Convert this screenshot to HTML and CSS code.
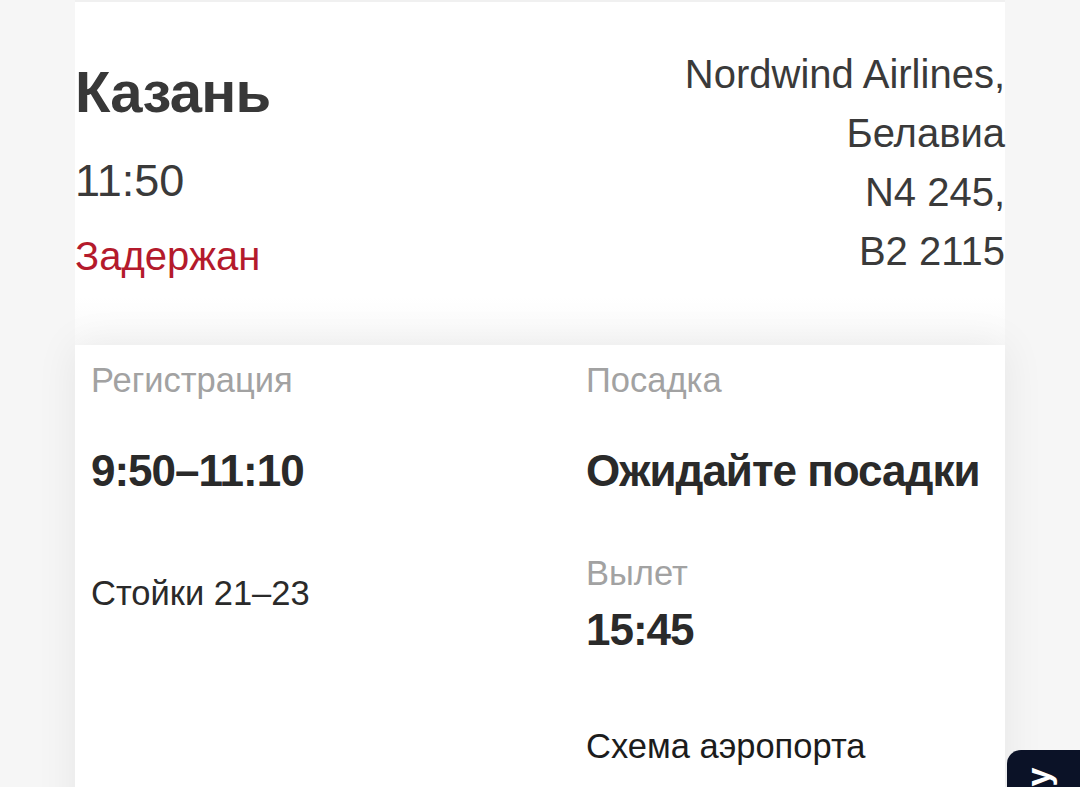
FILE: index.html
```html
<!DOCTYPE html>
<html lang="ru">
<head>
<meta charset="utf-8">
<title>Рейс</title>
<link rel="stylesheet" href="styles.css">
</head>
<body>
<div class="page">
  <section class="head">
    <div class="head-left">
      <div class="city">Казань</div>
      <div class="time">11:50</div>
      <div class="status">Задержан</div>
    </div>
    <div class="head-right">
      <div>Nordwind Airlines,</div>
      <div>Белавиа</div>
      <div>N4 245,</div>
      <div>B2 2115</div>
    </div>
  </section>
  <section class="card">
    <div class="col col-left">
      <div class="label">Регистрация</div>
      <div class="value">9:50–11:10</div>
      <div class="plain counters">Стойки 21–23</div>
    </div>
    <div class="col col-right">
      <div class="label">Посадка</div>
      <div class="value">Ожидайте посадки</div>
      <div class="label dep-label">Вылет</div>
      <div class="value dep-time">15:45</div>
      <div class="plain map">Схема аэропорта</div>
    </div>
  </section>
</div>
<div class="tab"><span class="tab-glyph">у</span></div>
</body>
</html>
```

FILE: styles.css
```css
html, body {
  margin: 0;
  padding: 0;
  height: 100%;
  overflow: hidden;
}
body {
  background: #f6f6f6;
  font-family: "Liberation Sans", Arial, sans-serif;
  color: #333;
}
.page {
  width: 930px;
  margin-left: 75px;
}
.head {
  height: 345px;
  box-sizing: border-box;
  padding-top: 43px;
  display: flex;
  justify-content: space-between;
  align-items: flex-start;
  background: linear-gradient(#ffffff 0%, #ffffff 86%, #f9f9f9 100%);
  border-top: 2px solid #f0f0f0;
}
.head-left {
  padding-top: 15px;
}
.city {
  font-size: 58px;
  line-height: 64px;
  font-weight: bold;
  color: #383838;
  letter-spacing: -0.8px;
}
.time {
  margin-top: 32px;
  font-size: 45px;
  line-height: 50px;
  color: #3a3a3a;
}
.status {
  margin-top: 28px;
  font-size: 40px;
  line-height: 44px;
  color: #b41a2c;
}
.head-right {
  text-align: right;
  font-size: 40px;
  line-height: 59px;
  color: #3a3a3a;
}
.card {
  background: #ffffff;
  box-shadow: 0 0 40px rgba(0, 0, 0, 0.07);
  display: grid;
  grid-template-columns: 495px 1fr;
  padding: 15px 0 60px 16px;
  min-height: 500px;
  box-sizing: border-box;
}
.label {
  font-size: 34.5px;
  line-height: 40px;
  color: #a2a2a2;
}
.value {
  margin-top: 46px;
  font-size: 44px;
  line-height: 50px;
  font-weight: bold;
  color: #2a2a2a;
  letter-spacing: -1px;
}
.plain {
  font-size: 34.5px;
  line-height: 40px;
  color: #2a2a2a;
}
.counters {
  margin-top: 77px;
}
.dep-label {
  margin-top: 57px;
}
.dep-time {
  margin-top: 12px;
}
.map {
  margin-top: 71px;
  color: #1c1c1c;
}
.tab {
  position: absolute;
  left: 1007px;
  top: 750px;
  width: 90px;
  height: 60px;
  background: #0b1227;
  border-top-left-radius: 14px;
  display: flex;
  align-items: flex-start;
  padding-left: 22px;
  padding-top: 10px;
  box-sizing: border-box;
}
.tab-glyph {
  display: inline-block;
  color: #ffffff;
  font-size: 34px;
  font-weight: bold;
  line-height: 34px;
  transform: rotate(-90deg);
}
```
